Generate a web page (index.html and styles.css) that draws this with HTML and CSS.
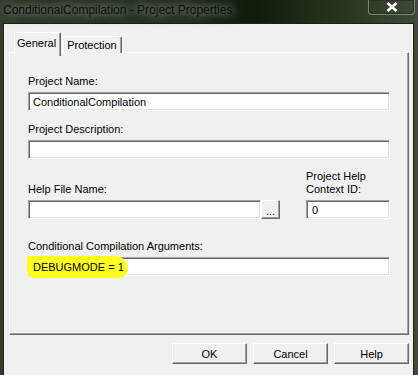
FILE: index.html
```html
<!DOCTYPE html>
<html lang="en">
<head>
  <meta charset="UTF-8" />
  <title>ConditionalCompilation - Project Properties</title>
  <link rel="stylesheet" href="styles.css">
</head>
<body>

<div class="window">
  <div class="titlebar">
    <span class="title">ConditionalCompilation - Project Properties</span>
    <span class="close">
      <svg width="12" height="10" viewBox="0 0 12 10">
        <path d="M1.5 1 L10.5 9 M10.5 1 L1.5 9" stroke="#ffffff" stroke-width="2.6" fill="none" />
      </svg>
    </span>
  </div>

  <div class="client">
    <div class="tabs">
      <span class="tab active">General</span>
      <span class="tab">Protection</span>
    </div>

    <div class="panel">
      <div class="label">Project Name:</div>
      <div class="field wide">ConditionalCompilation</div>

      <div class="label gap">Project Description:</div>
      <div class="field wide"></div>

      <div class="help-row">
        <div class="help-col">
          <div class="label">Help File Name:</div>
          <div class="file-line">
            <div class="field file"></div>
            <span class="browse">...</span>
          </div>
        </div>
        <div class="ctx-col">
          <div class="label">Project Help<br>Context ID:</div>
          <div class="field ctx">0</div>
        </div>
      </div>

      <div class="label args-label">Conditional Compilation Arguments:</div>
      <div class="field wide args">
        <span class="marker"></span>
        <span class="value">DEBUGMODE = 1</span>
      </div>
    </div>

    <div class="buttons">
      <button class="btn">OK</button>
      <button class="btn">Cancel</button>
      <button class="btn">Help</button>
    </div>
  </div>
</div>

</body>
</html>
```

FILE: styles.css
```css
body {
  margin: 0;
  font-family: 'Liberation Sans', Arial, sans-serif;
  font-size: 11px;
  color: #000;
  background: #2c352a;
}

/* ventana */
.window {
  width: 418px;
  height: 375px;
  box-sizing: border-box;
  padding: 0 4px 3px 3px;
  background: linear-gradient(90deg, #323d2e 0%, #283125 45%, #121a0e 60%, #26321e 80%, #3e4a3a 100%);
}

.titlebar {
  height: 23px;
  display: flex;
  justify-content: space-between;
  align-items: flex-start;
}

.title {
  font-size: 12px;
  line-height: 14px;
  padding-top: 3px;
  color: #0d0d0d;
  text-shadow: 0 0 6px #7b8377, 0 0 10px #6b7367, 0 0 14px #5b6357;
}

.close {
  width: 45px;
  height: 14px;
  margin-right: -1px;
  border: 1px solid #7a8676;
  border-top: none;
  border-radius: 0 0 4px 4px;
  box-shadow: inset 0 0 0 1px #2a3326;
  display: flex;
  justify-content: center;
  align-items: center;
}

.client {
  height: 347px;
  border: 1px solid #1b2317;
  background: #f0f0f0;
  padding: 8px 4px 0 5px;
  box-sizing: content-box;
}

/* pestañas */
.tabs {
  height: 20px;
  display: flex;
  align-items: flex-start;
  padding-left: 5px;
  position: relative;
  z-index: 1;
}

.tab {
  height: 15px;
  margin-top: 4px;
  padding: 1px 4px 0 4px;
  line-height: 14px;
  border: 1px solid #fff;
  border-right-color: #696969;
  border-bottom: none;
  box-shadow: inset -1px 0 0 #a0a0a0;
  border-radius: 2px 2px 0 0;
  background: #f0f0f0;
}

.tab.active {
  height: 20px;
  margin-top: 0;
  padding: 3px 4px 0 2px;
  margin-right: -1px;
}

.tab.active + .tab {
  margin-left: 2px;
}

.panel {
  width: 400px;
  height: 283px;
  box-sizing: border-box;
  border: 1px solid #fff;
  border-right-color: #696969;
  border-bottom-color: #696969;
  box-shadow: inset -1px -1px 0 #a0a0a0;
  padding: 22px 0 0 18px;
}

.label {
  line-height: 13px;
  margin-bottom: 4px;
}

.gap {
  margin-top: 12px;
}

.field {
  height: 19px;
  box-sizing: border-box;
  background: #fff;
  border: 1px solid;
  border-color: #a0a0a0 #fff #fff #a0a0a0;
  box-shadow: inset 1px 1px 0 #696969, inset -1px -1px 0 #e3e3e3;
  padding: 2px 0 0 4px;
  line-height: 14px;
  white-space: nowrap;
}

.wide {
  width: 362px;
}

.help-row {
  display: flex;
  margin-top: 11px;
}

.help-col, .ctx-col {
  display: flex;
  flex-direction: column;
  justify-content: flex-end;
}

.help-col {
  width: 278px;
}

.file-line {
  display: flex;
}

.file {
  width: 233px;
}

.browse {
  width: 19px;
  height: 19px;
  box-sizing: border-box;
  border: 1px solid;
  border-color: #fff #696969 #696969 #fff;
  box-shadow: inset -1px -1px 0 #a0a0a0;
  text-align: center;
  line-height: 20px;
}

.ctx {
  width: 84px;
  padding-left: 5px;
}

.args-label {
  margin-top: 21px;
}

.args {
  position: relative;
}

.marker {
  position: absolute;
  left: -2px;
  top: -2px;
  width: 101px;
  height: 22px;
  background: #ffff1e;
  border-radius: 3px 14px 10px 8px;
  filter: blur(0.7px);
}

.value {
  position: relative;
}

/* botones */
.buttons {
  display: flex;
  justify-content: flex-end;
  gap: 6px;
  margin-top: 8px;
}

.btn {
  width: 75px;
  height: 21px;
  padding: 0;
  font-family: 'Liberation Sans', Arial, sans-serif;
  font-size: 11px;
  color: #000;
  background: #f0f0f0;
  border: 1px solid;
  border-color: #fff #696969 #696969 #fff;
  box-shadow: inset -1px -1px 0 #a0a0a0;
}
```
